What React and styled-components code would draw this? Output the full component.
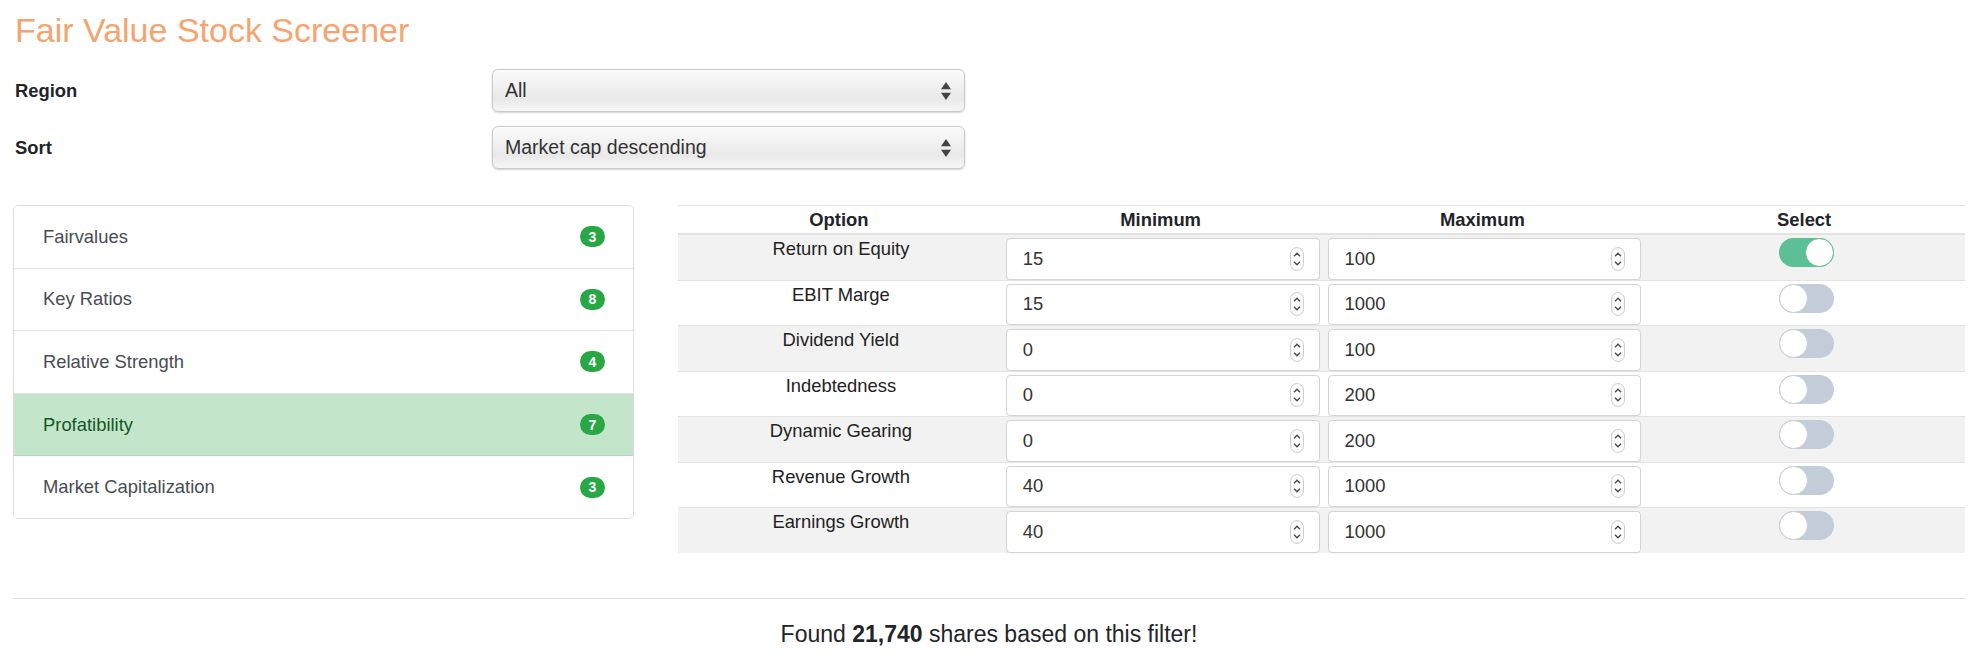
import React from 'react';
import styled, { createGlobalStyle } from 'styled-components';

const GlobalStyle = createGlobalStyle`
  body {
    margin: 0;
    background: #fff;
    color: #212529;
    font-family: 'Liberation Sans', Arial, sans-serif;
    font-size: 18.4px;
  }
`;

const Page = styled.div`
  padding: 0 15px 0 13px;
`;

const Title = styled.h1`
  margin: 10px 0 19px 2px;
  font-size: 34px;
  line-height: 40px;
  font-weight: 400;
  color: #f5a46f;
`;

const Form = styled.div`
  display: flex;
  flex-direction: column;
  gap: 14px;
  margin-bottom: 36px;
`;

const FormRow = styled.div`
  display: grid;
  grid-template-columns: 479px 473px;
  align-items: center;
`;

const Label = styled.label`
  font-weight: 700;
  padding-left: 2px;
`;

const SelectBox = styled.div`
  display: flex;
  align-items: center;
  justify-content: space-between;
  height: 43px;
  box-sizing: border-box;
  padding: 0 12px 0 12px;
  border: 1px solid #c9c9c9;
  border-radius: 6px;
  background: linear-gradient(to bottom, #fbfbfb 0%, #efefef 45%, #e9e9e9 70%, #f6f6f6 100%);
  box-shadow: inset 0 1px 0 #fff, 0 1px 2px rgba(0, 0, 0, 0.18);
  color: #333;
  font-size: 19.5px;
`;

const Main = styled.div`
  display: grid;
  grid-template-columns: 621px 1fr;
  column-gap: 44px;
  align-items: start;
`;

const ListGroup = styled.div`
  border: 1px solid #dcdcdc;
  border-radius: 5px;
  overflow: hidden;
`;

const ListItem = styled.div`
  display: flex;
  align-items: center;
  justify-content: space-between;
  height: 61.6px;
  padding: 0 28px 0 29px;
  background: ${(p) => (p.$active ? '#c3e6cb' : '#fff')};
  color: ${(p) => (p.$active ? '#155724' : '#474d52')};
  &:not(:last-child) {
    border-bottom: 1px solid ${(p) => (p.$active ? '#b5d8bd' : '#e2e2e2')};
  }
`;

const Badge = styled.span`
  display: inline-flex;
  align-items: center;
  justify-content: center;
  min-width: 25px;
  height: 21px;
  border-radius: 11px;
  background: #28a745;
  color: #fff;
  font-weight: 700;
  font-size: 14px;
`;

const Table = styled.table`
  width: 100%;
  border-collapse: collapse;
  table-layout: fixed;
`;

const Th = styled.th`
  height: 27px;
  padding: 0;
  border-top: 1px solid #e3e3e3;
  border-bottom: 2px solid #e3e3e3;
  font-weight: 700;
  text-align: center;
  line-height: 27px;
`;

const Row = styled.tr`
  background: ${(p) => (p.$striped ? '#f2f2f2' : '#fff')};
`;

const Td = styled.td`
  border-top: 1px solid #e3e3e3;
  padding: 3px 2px 0 6px;
  vertical-align: top;
  text-align: ${(p) => (p.$center ? 'center' : 'left')};
`;

const OptionTd = styled(Td)`
  padding-top: 1px;
  line-height: 1.4;
  text-align: center;
  color: #222;
`;

const NumberField = styled.div`
  display: flex;
  align-items: center;
  justify-content: space-between;
  height: 41.5px;
  box-sizing: border-box;
  padding: 0 15px 0 16px;
  border: 1px solid #d4d4d4;
  border-radius: 4px;
  background: #fff;
  box-shadow: 0 1px 1px rgba(0, 0, 0, 0.04);
  color: #333;
`;

const Track = styled.div`
  display: inline-flex;
  justify-content: ${(p) => (p.$on ? 'flex-end' : 'flex-start')};
  width: 55px;
  height: 29px;
  margin-top: 0;
  border-radius: 15px;
  background: ${(p) => (p.$on ? '#5cbf95' : '#c3cdd9')};
`;

const Knob = styled.span`
  width: 29px;
  height: 29px;
  box-sizing: border-box;
  border-radius: 50%;
  background: #fff;
  border: 1.5px solid ${(p) => (p.$on ? '#5cbf95' : '#c8cdd3')};
`;

const Rule = styled.hr`
  margin: 45px 0 0;
  border: 0;
  border-top: 1px solid #dedede;
`;

const Footer = styled.p`
  margin: 18px 0 0;
  text-align: center;
  font-size: 23px;
  line-height: 34px;
  color: #212529;
`;

const SelectArrows = () => (
  <svg width="12" height="20" viewBox="0 0 12 20">
    <path d="M6 1 L11 8.2 H1 Z" fill="#444" />
    <path d="M6 19 L11 11.8 H1 Z" fill="#444" />
  </svg>
);

const Spinner = () => (
  <svg width="14" height="24" viewBox="0 0 14 24">
    <rect x="0.6" y="0.6" width="12.8" height="22.8" rx="6.4" fill="#fff" stroke="#cacaca" strokeWidth="1" />
    <path d="M4 9.2 L7 6.2 L10 9.2" fill="none" stroke="#4a4a4a" strokeWidth="1.4" />
    <path d="M4 14.8 L7 17.8 L10 14.8" fill="none" stroke="#4a4a4a" strokeWidth="1.4" />
  </svg>
);

const categories = [
  { name: 'Fairvalues', count: 3 },
  { name: 'Key Ratios', count: 8 },
  { name: 'Relative Strength', count: 4 },
  { name: 'Profatibility', count: 7, active: true },
  { name: 'Market Capitalization', count: 3 },
];

const options = [
  { name: 'Return on Equity', min: 15, max: 100, on: true },
  { name: 'EBIT Marge', min: 15, max: 1000 },
  { name: 'Dividend Yield', min: 0, max: 100 },
  { name: 'Indebtedness', min: 0, max: 200 },
  { name: 'Dynamic Gearing', min: 0, max: 200 },
  { name: 'Revenue Growth', min: 40, max: 1000 },
  { name: 'Earnings Growth', min: 40, max: 1000 },
];

const App = () => {
  return (
    <Page>
      <GlobalStyle />
      <Title>Fair Value Stock Screener</Title>
      <Form>
        <FormRow>
          <Label>Region</Label>
          <SelectBox>
            <span>All</span>
            <SelectArrows />
          </SelectBox>
        </FormRow>
        <FormRow>
          <Label>Sort</Label>
          <SelectBox>
            <span>Market cap descending</span>
            <SelectArrows />
          </SelectBox>
        </FormRow>
      </Form>

      <Main>
        <ListGroup>
          {categories.map((c) => (
            <ListItem key={c.name} $active={c.active}>
              <span>{c.name}</span>
              <Badge>{c.count}</Badge>
            </ListItem>
          ))}
        </ListGroup>

        <Table>
          <thead>
            <tr>
              <Th>Option</Th>
              <Th>Minimum</Th>
              <Th>Maximum</Th>
              <Th>Select</Th>
            </tr>
          </thead>
          <tbody>
            {options.map((o, i) => (
              <Row key={o.name} $striped={i % 2 === 0}>
                <OptionTd>{o.name}</OptionTd>
                <Td>
                  <NumberField>
                    <span>{o.min}</span>
                    <Spinner />
                  </NumberField>
                </Td>
                <Td>
                  <NumberField>
                    <span>{o.max}</span>
                    <Spinner />
                  </NumberField>
                </Td>
                <Td $center>
                  <Track $on={o.on}>
                    <Knob $on={o.on} />
                  </Track>
                </Td>
              </Row>
            ))}
          </tbody>
        </Table>
      </Main>

      <Rule />
      <Footer>
        Found <b>21,740</b> shares based on this filter!
      </Footer>
    </Page>
  );
};

export default App;
